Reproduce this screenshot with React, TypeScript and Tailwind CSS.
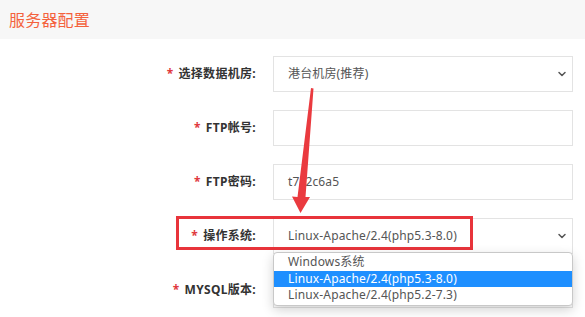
import { ChevronDown } from 'lucide-react';

const font = "font-['Noto_Sans','Noto_Sans_CJK_SC',sans-serif]";

type Row = { label: string; value?: string; select?: boolean };

const rows: Row[] = [
    { label: '选择数据机房:', value: '港台机房(推荐)', select: true },
    { label: 'FTP帐号:' },
    { label: 'FTP密码:', value: 't7c2c6a5' },
    { label: '操作系统:', value: 'Linux-Apache/2.4(php5.3-8.0)', select: true },
    { label: 'MYSQL版本:', select: true },
];

const options = ['Windows系统', 'Linux-Apache/2.4(php5.3-8.0)', 'Linux-Apache/2.4(php5.2-7.3)'];

export default function App() {
    return (
        <div className={`relative w-[585px] h-[317px] overflow-hidden bg-white ${font}`}>
            <div className="h-[39px] bg-[#f7f7f7] flex items-center pl-[9px]">
                <h1 className="text-[16px] text-[#f4623d] tracking-[0.2px]">服务器配置</h1>
            </div>

            <div className="pt-[17px]">
                {rows.map((row, idx) => (
                    <div key={idx} className="flex items-center h-[36px] mb-[18px]">
                        <div className="w-[256px] text-right text-[12px] font-bold text-[#333] tracking-[0.3px]">
                            <span className="text-[#e0393e] mr-[5px]">*</span>
                            {row.label}
                        </div>
                        <div className="ml-[17px] w-[300px] h-[36px] border border-[#e3e3e3] flex items-center justify-between pl-[14px] pr-[4px] text-[12px] tracking-[0.15px] text-[#555]">
                            <span>{row.value}</span>
                            {row.select && <ChevronDown size={12} strokeWidth={3} className="text-[#555]" />}
                        </div>
                    </div>
                ))}
            </div>

            {/* red highlight around 操作系统 */}
            <div className="absolute left-[176px] top-[216px] w-[297px] h-[34px] border-[3px] border-[#e8343b]" />

            {/* open dropdown */}
            <div className="absolute left-[273px] top-[252px] w-[300px] rounded-[4px] border border-[#c8c8c8] bg-white shadow-[0_4px_12px_rgba(0,0,0,0.18)] overflow-hidden py-[1px]">
                {options.map((opt, idx) => (
                    <div
                        key={idx}
                        className={`h-[16.5px] leading-[16.5px] pl-[14px] text-[12px] tracking-[0.15px] ${idx === 1 ? 'bg-[#1e8fff] text-white' : 'text-[#555]'}`}
                    >
                        {opt}
                    </div>
                ))}
            </div>

            {/* annotation arrow */}
            <svg className="absolute left-0 top-0" width="585" height="317" viewBox="0 0 585 317">
                <path d="M311 88 L313.5 88.5 L305.5 197 L310 197 L300.5 213 L292 196.5 L297.5 197 Z" fill="#ea3a3f" />
            </svg>
        </div>
    );
}
